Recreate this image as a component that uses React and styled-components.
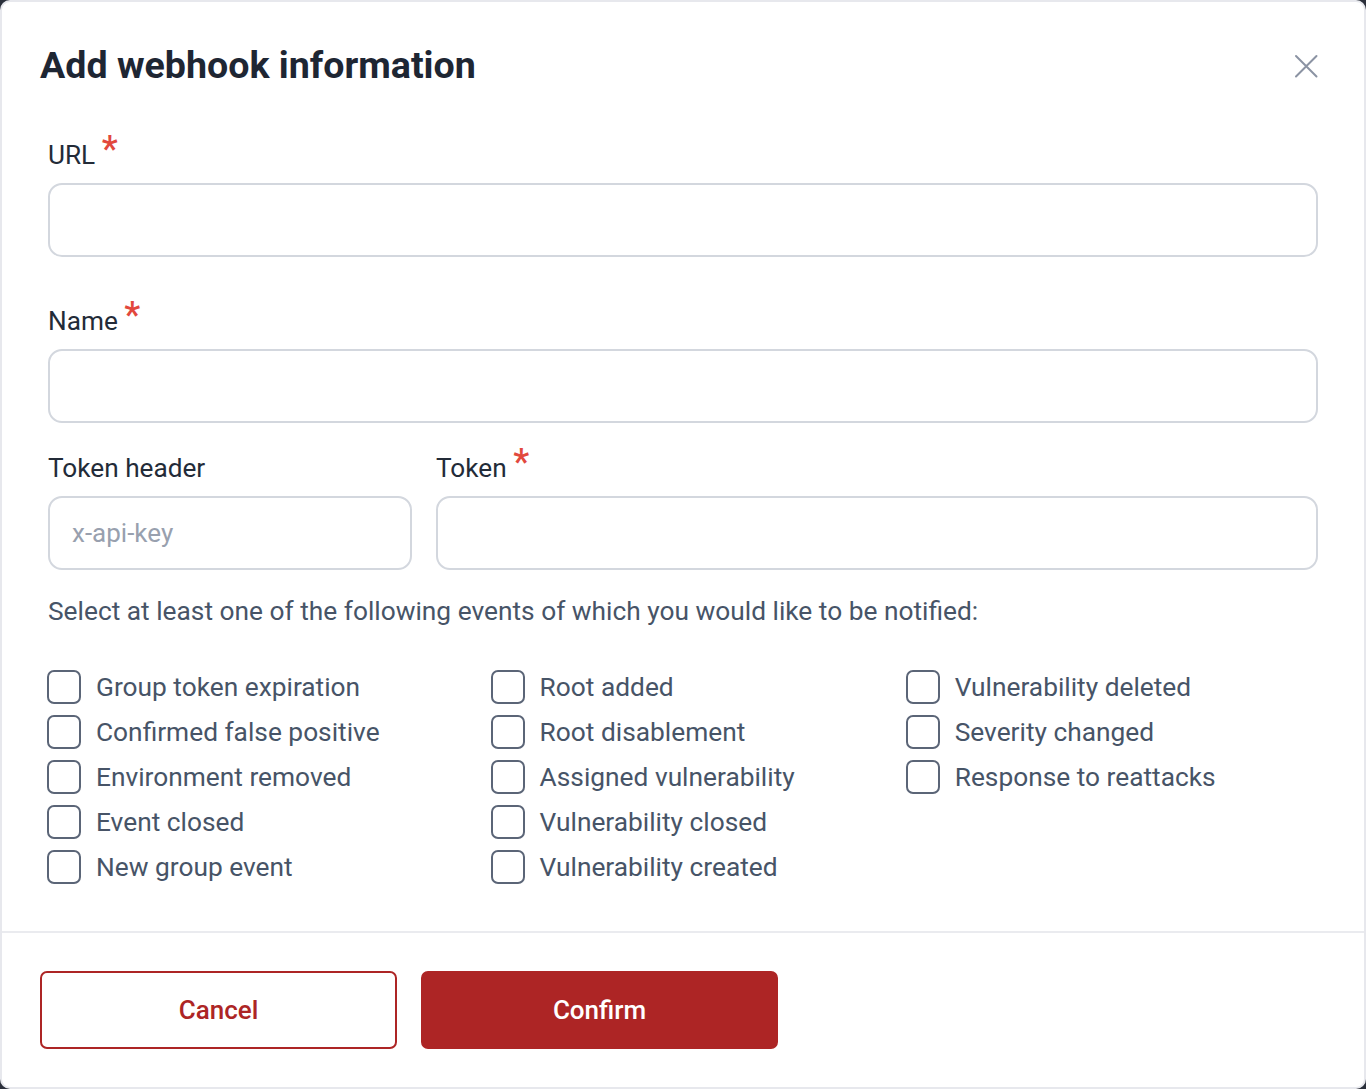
import React from "react";
import styled, { createGlobalStyle } from "styled-components";

const GlobalStyle = createGlobalStyle`
  * {
    box-sizing: border-box;
  }
  body {
    margin: 0;
    background: #2b303b;
    font-family: Roboto, "Liberation Sans", Arial, sans-serif;
  }
`;

const events = [
  "Group token expiration",
  "Confirmed false positive",
  "Environment removed",
  "Event closed",
  "New group event",
  "Root added",
  "Root disablement",
  "Assigned vulnerability",
  "Vulnerability closed",
  "Vulnerability created",
  "Vulnerability deleted",
  "Severity changed",
  "Response to reattacks",
];

const Modal = () => {
  return (
    <Wrapper>
      <Header>
        <Title>Add webhook information</Title>
        <CloseButton aria-label="close">
          <svg width="24" height="24" viewBox="0 0 24 24" fill="none">
            <path
              d="M2 2L22.5 22.5M22.5 2L2 22.5"
              stroke="#8b93a3"
              strokeWidth="2"
              strokeLinecap="round"
            />
          </svg>
        </CloseButton>
      </Header>

      <Form>
        <Field $top={52}>
          <Label>
            URL <Required>*</Required>
          </Label>
          <Input />
        </Field>

        <Field $top={48}>
          <Label>
            Name <Required>*</Required>
          </Label>
          <Input />
        </Field>

        <Row>
          <Field $top={29} $width="364px">
            <Label>Token header</Label>
            <Input placeholder="x-api-key" />
          </Field>
          <Field $top={29} $grow>
            <Label>
              Token <Required>*</Required>
            </Label>
            <Input />
          </Field>
        </Row>

        <Hint>
          Select at least one of the following events of which you would like
          to be notified:
        </Hint>

        <EventGrid>
          {events.map((item) => (
            <CheckRow key={item}>
              <Box type="checkbox" />
              <span>{item}</span>
            </CheckRow>
          ))}
        </EventGrid>
      </Form>

      <Footer>
        <Button $variant="outline">Cancel</Button>
        <Button>Confirm</Button>
      </Footer>
    </Wrapper>
  );
};

const Wrapper = styled.div`
  height: 1089px;
  background: #fff;
  border: 2px solid #e7e8ed;
  border-radius: 10px;
  display: flex;
  flex-direction: column;
  overflow: hidden;
`;

const Header = styled.div`
  display: flex;
  justify-content: space-between;
  align-items: center;
  padding: 41px 46px 0 38px;
`;

const Title = styled.h1`
  margin: 0;
  font-size: 37.6px;
  line-height: 44px;
  font-weight: 700;
  color: #1e2633;
`;

const CloseButton = styled.button`
  border: none;
  background: none;
  padding: 0;
  width: 24px;
  height: 24px;
  margin-top: 2px;
  cursor: pointer;
`;

const Form = styled.div`
  padding: 0 46px;
  flex: 1;
`;

const Field = styled.div`
  display: flex;
  flex-direction: column;
  gap: 12px;
  margin-top: ${({ $top }) => $top}px;
  width: ${({ $width }) => $width || "auto"};
  flex: ${({ $grow }) => ($grow ? 1 : "none")};
`;

const Row = styled.div`
  display: flex;
  gap: 24px;
`;

const Label = styled.label`
  font-size: 26.2px;
  line-height: 32px;
  color: #232b38;
`;

const Required = styled.span`
  color: #e2483d;
  font-size: 36px;
  font-weight: 500;
  line-height: 32px;
  vertical-align: top;
  position: relative;
  top: -6px;
`;

const Input = styled.input`
  height: 74px;
  width: 100%;
  border: 2px solid #d3d7de;
  border-radius: 14px;
  padding: 0 22px;
  font-family: inherit;
  font-size: 26px;
  color: #232b38;
  outline: none;

  &::placeholder {
    color: #98a0ae;
  }
`;

const Hint = styled.p`
  margin: 25px 0 0;
  font-size: 26.3px;
  line-height: 32px;
  color: #475467;
`;

const EventGrid = styled.div`
  margin-top: 43px;
  display: grid;
  grid-auto-flow: column;
  grid-template-rows: repeat(5, 34px);
  grid-template-columns: repeat(3, max-content);
  column-gap: 112px;
  row-gap: 11px;
`;

const CheckRow = styled.label`
  display: flex;
  align-items: center;
  gap: 15px;
  font-size: 26.3px;
  line-height: 32px;
  color: #475467;
`;

const Box = styled.input`
  appearance: none;
  margin: 0 0 0 -1px;
  width: 34px;
  height: 34px;
  border: 2px solid #5b6577;
  border-radius: 7px;
  background: #fff;
  flex: none;
`;

const Footer = styled.div`
  border-top: 2px solid #eaebef;
  padding: 38px 38px 38px;
  display: flex;
  gap: 24px;
`;

const Button = styled.button`
  width: 357px;
  height: 78px;
  border-radius: 7px;
  font-family: inherit;
  font-size: 26px;
  font-weight: 500;
  cursor: pointer;
  border: 2px solid #ad2525;
  background: ${({ $variant }) => ($variant === "outline" ? "#fff" : "#ad2525")};
  color: ${({ $variant }) => ($variant === "outline" ? "#ad2525" : "#fff")};
`;

const App = () => (
  <>
    <GlobalStyle />
    <Modal />
  </>
);

export default App;
